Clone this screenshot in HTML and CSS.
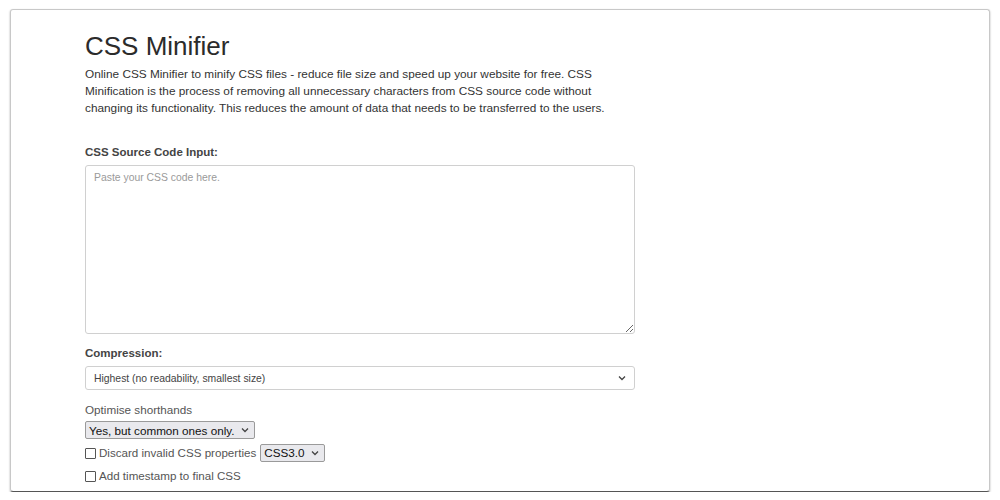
FILE: index.html
```html
<!DOCTYPE html>
<html>
<head>
<meta charset="utf-8">
<link rel="stylesheet" href="styles.css">
</head>
<body>
<div class="frame">
  <div class="content">
    <h1 class="title">CSS Minifier</h1>
    <p class="intro">Online CSS Minifier to minify CSS files - reduce file size and speed up your website for free. CSS Minification is the process of removing all unnecessary characters from CSS source code without changing its functionality. This reduces the amount of data that needs to be transferred to the users.</p>
    <label class="label label-source">CSS Source Code Input:</label>
    <textarea class="source" placeholder="Paste your CSS code here."></textarea>
    <label class="label label-comp">Compression:</label>
    <div class="select-wide">
      <span>Highest (no readability, smallest size)</span>
      <svg class="chev" width="8" height="6" viewBox="0 0 8 6"><path d="M1 1.5 L4 4.5 L7 1.5" fill="none" stroke="#444" stroke-width="1.3"/></svg>
    </div>
    <div class="opt-title">Optimise shorthands</div>
    <div class="row">
      <div class="select-small"><span>Yes, but common ones only.</span><svg class="chev" width="8" height="6" viewBox="0 0 8 6"><path d="M1 1.5 L4 4.5 L7 1.5" fill="none" stroke="#444" stroke-width="1.3"/></svg></div>
    </div>
    <div class="row check-row">
      <span class="box"></span><span class="check-text">Discard invalid CSS properties</span>
      <div class="select-small"><span>CSS3.0</span><svg class="chev" width="8" height="6" viewBox="0 0 8 6"><path d="M1 1.5 L4 4.5 L7 1.5" fill="none" stroke="#444" stroke-width="1.3"/></svg></div>
    </div>
    <div class="row check-row">
      <span class="box"></span><span class="check-text">Add timestamp to final CSS</span>
    </div>
  </div>
</div>
</body>
</html>
```
FILE: styles.css
```css
html, body {
  margin: 0;
  padding: 0;
  background: #ffffff;
}
body {
  font-family: "Liberation Sans", Arial, sans-serif;
  color: #333;
}
.frame {
  margin: 9px 10px 0 10px;
  height: 483px;
  border: 1px solid #c8c8c8;
  border-bottom: 1px solid #555;
  border-radius: 3px;
  box-shadow: 0 1px 2px rgba(0,0,0,0.35);
  overflow: hidden;
  box-sizing: border-box;
}
.content {
  padding: 21px 0 0 74px;
  width: 550px;
  display: flex;
  flex-direction: column;
}
.title {
  font-size: 26px;
  font-weight: normal;
  line-height: 30px;
  margin: 0;
  color: #2b2b2b;
}
.intro {
  font-size: 11.8px;
  line-height: 17px;
  margin: 5px 0 0 0;
  width: 540px;
  color: #333;
}
.label {
  font-size: 11.5px;
  font-weight: bold;
  color: #444;
  display: block;
}
.label-source {
  margin-top: 29px;
}
.source {
  margin-top: 7px;
  height: 169px;
  width: 550px;
  box-sizing: border-box;
  border: 1px solid #d0d0d0;
  border-radius: 3px;
  padding: 6px 8px;
  font-family: "Liberation Sans", Arial, sans-serif;
  font-size: 10.4px;
  resize: vertical;
  outline: none;
}
.source::placeholder {
  color: #9a9a9a;
}
.label-comp {
  margin-top: 13px;
}
.select-wide {
  margin-top: 7px;
  height: 24px;
  width: 550px;
  box-sizing: border-box;
  border: 1px solid #d0d0d0;
  border-radius: 3px;
  padding: 0 8px;
  font-size: 10.4px;
  color: #444;
  display: flex;
  align-items: center;
  justify-content: space-between;
}
.opt-title {
  margin-top: 13px;
  font-size: 11.7px;
  color: #555;
}
.row {
  display: flex;
  align-items: center;
  margin-top: 5px;
}
.select-small {
  height: 18px;
  box-sizing: border-box;
  border: 1px solid #9a9a9a;
  border-radius: 2px;
  background: #e9e9ed;
  padding: 0 5px 0 3px;
  font-size: 11.7px;
  color: #111;
  display: flex;
  align-items: center;
  gap: 6px;
}
.check-row {
  margin-top: 5px;
  font-size: 11.6px;
  line-height: 18px;
  color: #555;
}
.check-row + .check-row {
  margin-top: 5px;
}
.box {
  width: 9px;
  height: 9px;
  border: 1px solid #555;
  border-radius: 1px;
  margin: 0 3px 0 0;
}
.check-text {
  margin-right: 4px;
}
```
